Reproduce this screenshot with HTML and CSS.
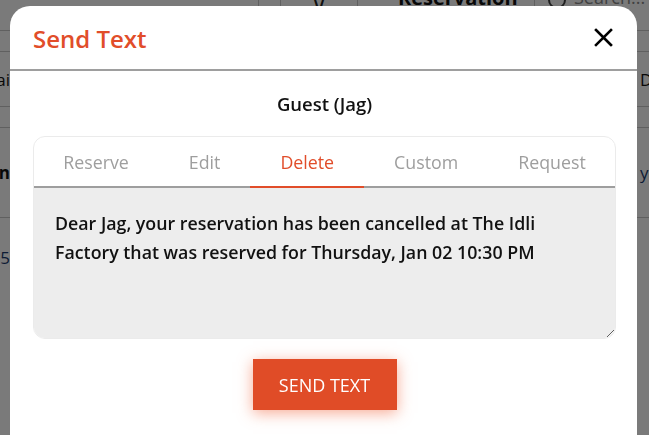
FILE: index.html
```
<!DOCTYPE html>
<html lang="en">
<head>
<meta charset="utf-8">
<title>Send Text</title>
<link rel="stylesheet" href="styles.css">
</head>
<body>
<div class="page">
  <div class="bg-header">
    <div class="bg-cell bg-c1"></div>
    <div class="bg-cell bg-c2"></div>
    <div class="bg-cell bg-c3"><span class="chev">&#8744;</span></div>
    <div class="bg-cell bg-c4"><span class="bg-title">Reservation</span></div>
    <div class="bg-cell bg-c5"><span class="search-ico"></span><span class="bg-search">Search...</span></div>
  </div>
  <div class="bg-row r2"></div>
  <div class="bg-row r3"><span class="bg-left"><span>Detai</span></span><span class="bg-right"><span>Date</span></span></div>
  <div class="bg-row r4"></div>
  <div class="bg-row r5"><span class="bg-left strong"><span>Timin</span></span><span class="bg-right link"><span>y</span></span></div>
  <div class="bg-row r6"><span class="bg-left link"><span>12:15</span></span></div>
</div>
<div class="backdrop"></div>
<div class="modal">
  <div class="modal-head">
    <h1 class="modal-title">Send Text</h1>
    <button class="close-btn" aria-label="Close">
      <svg width="19" height="19" viewBox="0 0 19 19"><path d="M2 2 L17 17 M17 2 L2 17" stroke="#000" stroke-width="2.6" stroke-linecap="square" fill="none"/></svg>
    </button>
  </div>
  <div class="modal-body">
    <div class="guest">Guest (Jag)</div>
    <div class="card">
      <div class="tabs">
        <div class="tab">Reserve</div>
        <div class="tab">Edit</div>
        <div class="tab active">Delete</div>
        <div class="tab">Custom</div>
        <div class="tab">Request</div>
      </div>
      <textarea class="message" readonly>Dear Jag, your reservation has been cancelled at The Idli Factory that was reserved for Thursday, Jan 02 10:30 PM</textarea>
    </div>
    <div class="actions">
      <button class="send-btn">Send Text</button>
    </div>
  </div>
</div>
</body>
</html>
```
FILE: styles.css
```
html, body {
  margin: 0;
  padding: 0;
  width: 649px;
  height: 435px;
  overflow: hidden;
  background: #fff;
  font-family: "Open Sans", "Noto Sans", sans-serif;
}

.page {
  display: flex;
  flex-direction: column;
  width: 649px;
}

.bg-header {
  display: grid;
  grid-template-columns: 259px 22px 77px 177px 114px;
  height: 31px;
  border-bottom: 1px solid #c8c8c8;
  box-sizing: border-box;
}
.bg-cell {
  border-right: 1px solid #c8c8c8;
  display: flex;
  align-items: flex-start;
  overflow: hidden;
}
.bg-c5 { border-right: none; gap: 8px; padding-left: 13px; }
.chev {
  margin: -12px auto 0;
  font-size: 22px;
  color: #222;
}
.bg-title {
  margin: -16px 0 0 40px;
  font-size: 20px;
  font-weight: 700;
  color: #111;
}
.search-ico {
  width: 14px;
  height: 14px;
  border: 2px solid #444;
  border-radius: 50%;
  margin-top: -9px;
}
.bg-search {
  margin-top: -15px;
  font-size: 18px;
  color: #888;
}

.bg-row {
  display: flex;
  justify-content: space-between;
  align-items: center;
  border-bottom: 1px solid #c8c8c8;
  box-sizing: border-box;
  font-size: 17px;
  color: #111;
}
.r2 { height: 21px; }
.r3 { height: 55px; }
.r4 { height: 21px; }
.r5 { height: 90px; }
.r6 { height: 90px; align-items: flex-start; padding-top: 28px; border-bottom: none; }
.bg-left {
  width: 10px;
  display: flex;
  justify-content: flex-end;
  white-space: nowrap;
}
.bg-right {
  width: 9px;
  display: flex;
  justify-content: flex-start;
  white-space: nowrap;
}
.strong { font-weight: 700; }
.link { color: #1a3a70; }

.backdrop {
  position: fixed;
  inset: 0;
  background: rgba(0, 0, 0, 0.52);
}

.modal {
  position: absolute;
  left: 10px;
  top: 6px;
  width: 627px;
  height: 470px;
  background: #fff;
  border-radius: 20px;
  display: flex;
  flex-direction: column;
}

.modal-head {
  height: 63px;
  display: flex;
  align-items: center;
  justify-content: space-between;
  padding: 0 24px 0 23px;
  border-bottom: 2px solid #9e9e9e;
}
.modal-title {
  margin: 0;
  font-size: 24px;
  font-weight: 600;
  color: #e14d2a;
  padding-top: 2px;
}
.close-btn {
  border: none;
  background: none;
  padding: 0;
  width: 19px;
  height: 19px;
  display: flex;
  cursor: pointer;
}

.modal-body {
  padding: 0 21px 0 23px;
  display: flex;
  flex-direction: column;
}

.guest {
  margin-top: 21px;
  height: 24px;
  line-height: 24px;
  text-align: center;
  font-size: 18.5px;
  font-weight: 600;
  color: #111;
}

.card {
  margin-top: 20px;
  border: 1px solid #ebebeb;
  border-radius: 12px;
  overflow: hidden;
  display: flex;
  flex-direction: column;
}

.tabs {
  display: flex;
  justify-content: center;
  height: 49px;
  border-bottom: 2px solid #9e9e9e;
}
.tab {
  padding: 0 30px;
  display: flex;
  align-items: center;
  font-size: 17.8px;
  color: #9e9e9e;
}
.tab.active {
  color: #e14d2a;
  border-bottom: 2px solid #e14d2a;
  margin-bottom: -2px;
}

.message {
  display: block;
  box-sizing: border-box;
  width: 100%;
  height: 150px;
  margin: 0;
  border: none;
  outline: none;
  background: #ededed;
  padding: 21px 26px 21px 21px;
  font-family: inherit;
  font-size: 17.8px;
  font-weight: 600;
  line-height: 29px;
  color: #111;
  resize: vertical;
}

.actions {
  display: flex;
  justify-content: center;
  margin-top: 20px;
}
.send-btn {
  width: 144px;
  height: 51px;
  border: none;
  background: #e04c27;
  color: #fff;
  font-family: inherit;
  font-size: 18px;
  font-weight: 500;
  text-transform: uppercase;
  box-shadow: 0 3px 14px rgba(240, 100, 60, 0.55);
  cursor: pointer;
}
```
